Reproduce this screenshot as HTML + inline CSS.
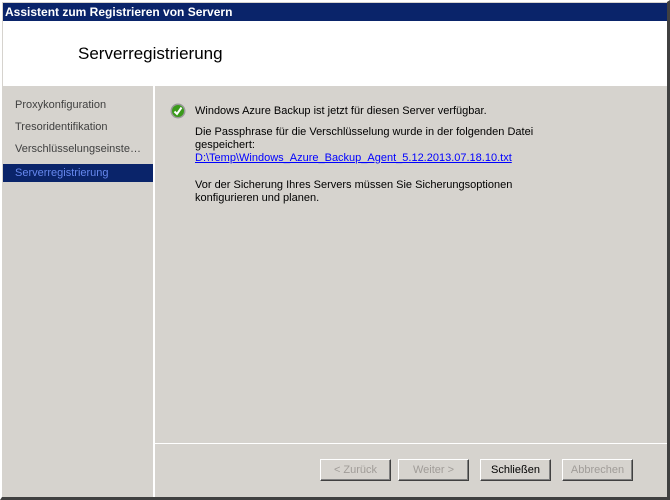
<!DOCTYPE html>
<html><head><style>
body{margin:0;width:670px;height:500px;overflow:hidden;background:#d6d3ce;font-family:"Liberation Sans",sans-serif;font-size:11px;position:relative}
.a{position:absolute}
.btn{position:absolute;top:459px;width:71px;height:22px;border:1px solid;border-color:#fff #404040 #404040 #fff;box-shadow:inset -1px -1px #808080;text-align:center;line-height:20px;color:#a09c98;box-sizing:border-box}
</style></head><body>
<div class="a" style="left:0;top:0;width:670px;height:500px;border-left:2px solid #fff;border-top:2px solid #fff;border-right:3px solid #404040;border-bottom:3px solid #404040;box-sizing:border-box"></div>
<div class="a" style="left:3px;top:3px;width:664px;height:18px;background:#0a246a;color:#fff;font-weight:bold;font-size:12px;line-height:18px;padding-left:2px;box-sizing:border-box">Assistent zum Registrieren von Servern</div>
<div class="a" style="left:3px;top:21px;width:664px;height:65px;background:#fff"></div>
<div class="a" style="left:78px;top:44px;font-size:17px;color:#000">Serverregistrierung</div>
<div class="a" style="left:153px;top:86px;width:2px;height:411px;background:#fff"></div>
<div class="a" style="left:155px;top:443px;width:512px;height:1px;background:#fff"></div>
<div class="a" style="left:15px;top:99px;color:#404040">Proxykonfiguration</div>
<div class="a" style="left:15px;top:121px;color:#404040">Tresoridentifikation</div>
<div class="a" style="left:15px;top:143px;color:#404040">Verschlüsselungseinste…</div>
<div class="a" style="left:3px;top:164px;width:150px;height:18px;background:#0a246a;color:#6688ee;line-height:18px;padding-left:12px;box-sizing:border-box">Serverregistrierung</div>
<svg class="a" style="left:170px;top:103px" width="16" height="16"><circle cx="8" cy="8" r="7.5" fill="#999"/><circle cx="8" cy="8" r="6" fill="#3a9a1a"/><path d="M4.5 8.5 L7 11 L11.5 4.5" stroke="#fff" stroke-width="2" fill="none"/></svg>
<div class="a" style="left:195px;top:105px">Windows Azure Backup ist jetzt für diesen Server verfügbar.</div>
<div class="a" style="left:195px;top:126px;line-height:13px">Die Passphrase für die Verschlüsselung wurde in der folgenden Datei<br>gespeichert:<br><span style="color:#00f;text-decoration:underline">D:\Temp\Windows_Azure_Backup_Agent_5.12.2013.07.18.10.txt</span></div>
<div class="a" style="left:195px;top:179px;line-height:13px">Vor der Sicherung Ihres Servers müssen Sie Sicherungsoptionen<br>konfigurieren und planen.</div>
<div class="btn" style="left:320px">&lt; Zurück</div>
<div class="btn" style="left:398px">Weiter &gt;</div>
<div class="btn" style="left:480px;color:#000">Schließen</div>
<div class="btn" style="left:562px">Abbrechen</div>
</body></html>
